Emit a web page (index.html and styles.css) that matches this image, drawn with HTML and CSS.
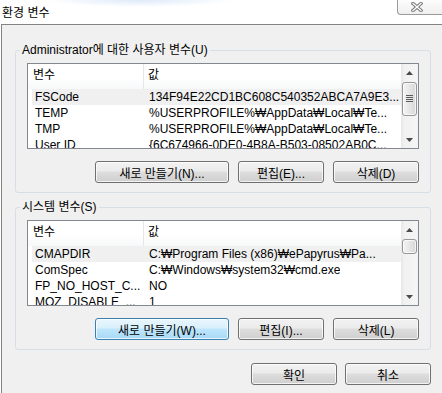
FILE: index.html
```html
<!DOCTYPE html>
<html>
<head>
    <meta charset="utf-8">
    <title>환경 변수</title>
    <link rel="stylesheet" href="styles.css">
</head>
<body>
    <div class="window">
        <div class="titlebar">
            <span class="title">환경 변수</span>
            <div class="close-btn">
                <svg width="12" height="10" viewBox="0 0 12 10">
                    <path d="M2 1.5 L10 8.5 M10 1.5 L2 8.5" stroke="#7a7a7a" stroke-width="3.4" stroke-linecap="square" fill="none" />
                    <path d="M2 1.5 L10 8.5 M10 1.5 L2 8.5" stroke="#ffffff" stroke-width="1.3" stroke-linecap="square" fill="none" />
                </svg>
            </div>
        </div>

        <div class="client">
            <fieldset class="group">
                <legend>Administrator에 대한 사용자 변수(U)</legend>
                <div class="group-body">
                    <div class="listview">
                        <div class="list-main">
                            <div class="list-header">
                                <span class="hcell name">변수</span>
                                <span class="hcell value">값</span>
                            </div>
                            <div class="row selected"><span class="cell name">FSCode</span><span class="cell value">134F94E22CD1BC608C540352ABCA7A9E3...</span></div>
                            <div class="row"><span class="cell name">TEMP</span><span class="cell value">%USERPROFILE%₩AppData₩Local₩Te...</span></div>
                            <div class="row"><span class="cell name">TMP</span><span class="cell value">%USERPROFILE%₩AppData₩Local₩Te...</span></div>
                            <div class="row"><span class="cell name">User ID</span><span class="cell value">{6C674966-0DE0-4B8A-B503-08502AB0C...</span></div>
                        </div>
                        <div class="scrollbar">
                            <div class="sb-arrow"><svg width="7" height="4" viewBox="0 0 7 4"><path d="M0 4 H7 L3.5 0 Z" fill="#4a4a4a" /></svg></div>
                            <div class="sb-track">
                                <div class="sb-thumb" style="height: 34px;">
                                    <svg class="grip" width="7" height="8" viewBox="0 0 7 8">
                                        <path d="M0 0.5 H7 M0 2.5 H7 M0 4.5 H7 M0 6.5 H7" stroke="#5a5a5a" stroke-width="1" />
                                    </svg>
                                </div>
                            </div>
                            <div class="sb-arrow"><svg width="7" height="4" viewBox="0 0 7 4"><path d="M0 0 H7 L3.5 4 Z" fill="#4a4a4a" /></svg></div>
                        </div>
                    </div>
                    <div class="buttons">
                        <button class="btn wide">새로 만들기(N)...</button>
                        <button class="btn">편집(E)...</button>
                        <button class="btn">삭제(D)</button>
                    </div>
                </div>
            </fieldset>

            <fieldset class="group">
                <legend>시스템 변수(S)</legend>
                <div class="group-body">
                    <div class="listview">
                        <div class="list-main">
                            <div class="list-header">
                                <span class="hcell name">변수</span>
                                <span class="hcell value">값</span>
                            </div>
                            <div class="row selected"><span class="cell name">CMAPDIR</span><span class="cell value">C:₩Program Files (x86)₩ePapyrus₩Pa...</span></div>
                            <div class="row"><span class="cell name">ComSpec</span><span class="cell value">C:₩Windows₩system32₩cmd.exe</span></div>
                            <div class="row"><span class="cell name">FP_NO_HOST_C...</span><span class="cell value">NO</span></div>
                            <div class="row"><span class="cell name">MOZ_DISABLE_...</span><span class="cell value">1</span></div>
                        </div>
                        <div class="scrollbar">
                            <div class="sb-arrow"><svg width="7" height="4" viewBox="0 0 7 4"><path d="M0 4 H7 L3.5 0 Z" fill="#4a4a4a" /></svg></div>
                            <div class="sb-track">
                                <div class="sb-thumb" style="height: 15px;"></div>
                            </div>
                            <div class="sb-arrow"><svg width="7" height="4" viewBox="0 0 7 4"><path d="M0 0 H7 L3.5 4 Z" fill="#4a4a4a" /></svg></div>
                        </div>
                    </div>
                    <div class="buttons">
                        <button class="btn wide hot">새로 만들기(W)...</button>
                        <button class="btn">편집(I)...</button>
                        <button class="btn">삭제(L)</button>
                    </div>
                </div>
            </fieldset>

            <div class="footer">
                <button class="btn">확인</button>
                <button class="btn">취소</button>
            </div>
        </div>
    </div>
</body>
</html>
```

FILE: styles.css
```css
body {
    margin: 0;
    width: 442px;
    height: 393px;
    overflow: hidden;
    background: #fff;
    font-family: "Liberation Sans", "Noto Sans CJK KR", sans-serif;
    font-size: 12px;
    color: #000;
}

.window {
    display: flex;
    flex-direction: column;
    height: 100%;
}

/* title bar */
.titlebar {
    display: flex;
    align-items: flex-start;
    height: 24px;
    flex-shrink: 0;
    background: radial-gradient(ellipse 95px 7px at 140px 0, rgba(160,195,240,0.35), rgba(160,195,240,0)), #fff;
}

.title {
    padding: 5px 0 0 2px;
    line-height: 16px;
}

.close-btn {
    margin-left: auto;
    width: 45px;
    height: 15px;
    box-sizing: border-box;
    border-left: 1px solid #9a9a9a;
    border-bottom: 1px solid #9a9a9a;
    border-bottom-left-radius: 4px;
    background: linear-gradient(#fdfdfd, #efefef);
    display: flex;
    align-items: center;
    justify-content: center;
    padding-right: 7px;
}

/* client area */
.client {
    flex: 1;
    margin-left: 1px;
    border-top: 1px solid #838383;
    border-left: 1px solid #838383;
    background: #f0f0f0;
    padding: 17px 11px 0 13px;
}

.group {
    margin: 0;
    padding: 0;
    min-width: 0;
    border: 1px solid #d5dfe5;
    border-radius: 3px;
}

.group + .group {
    margin-top: 6px;
}

.group legend {
    margin-left: 4px;
    padding: 0 2px;
    line-height: 16px;
}

.group-body {
    padding: 5px 11px 9px;
}

/* list view */
.listview {
    display: flex;
    height: 86px;
    box-sizing: border-box;
    border: 1px solid #828790;
    background: #fff;
}

.list-main {
    flex: 1;
    min-width: 0;
    overflow: hidden;
}

.list-header {
    display: flex;
    height: 25px;
    line-height: 22px;
    background: linear-gradient(#ffffff, #ffffff 55%, #f7f8f9);
}

.hcell.name {
    width: 116px;
    box-sizing: border-box;
    padding-left: 5px;
    border-right: 1px solid #e3e6ea;
}

.hcell.value {
    padding-left: 4px;
}

.row {
    display: flex;
    height: 16px;
    line-height: 16px;
    margin-left: 4px;
    white-space: nowrap;
}

.row.selected {
    background: #f0f0f0;
}

.cell {
    overflow: hidden;
}

.cell.name {
    width: 112px;
    flex-shrink: 0;
    box-sizing: border-box;
    padding-left: 3px;
}

.cell.value {
    padding-left: 5px;
}

/* scroll bar */
.scrollbar {
    width: 17px;
    flex-shrink: 0;
    display: flex;
    flex-direction: column;
    background: linear-gradient(to right, #e7e7e7, #f1f1f1 20%, #f5f5f5);
}

.sb-arrow {
    height: 17px;
    flex-shrink: 0;
    display: flex;
    align-items: center;
    justify-content: center;
}

.sb-track {
    flex: 1;
    padding-top: 1px;
}

.sb-thumb {
    margin: 0 1px;
    box-sizing: border-box;
    border: 1px solid #979797;
    border-radius: 3px;
    background: linear-gradient(to right, #f4f4f4, #e6e6e6 50%, #d8d8d8);
    box-shadow: inset 0 0 0 1px rgba(255,255,255,0.7);
    display: flex;
    align-items: center;
    justify-content: center;
}

/* buttons */
.buttons {
    display: flex;
    justify-content: flex-end;
    gap: 9px;
    margin-top: 12px;
}

.footer {
    display: flex;
    justify-content: flex-end;
    gap: 8px;
    margin-top: 13px;
}

.btn {
    width: 86px;
    height: 22px;
    box-sizing: border-box;
    padding: 0;
    border: 1px solid #707070;
    border-radius: 3px;
    background: linear-gradient(#f2f2f2, #ebebeb 45%, #dddddd 50%, #cfcfcf);
    box-shadow: inset 0 0 0 1px rgba(255,255,255,0.75);
    font: inherit;
    color: #000;
}

.btn.wide {
    width: 134px;
}

.btn.hot {
    border-color: #3c7fb1;
    background: linear-gradient(#eaf6fd, #d9f0fc 45%, #bee6fd 50%, #a7d9f5);
}
```
